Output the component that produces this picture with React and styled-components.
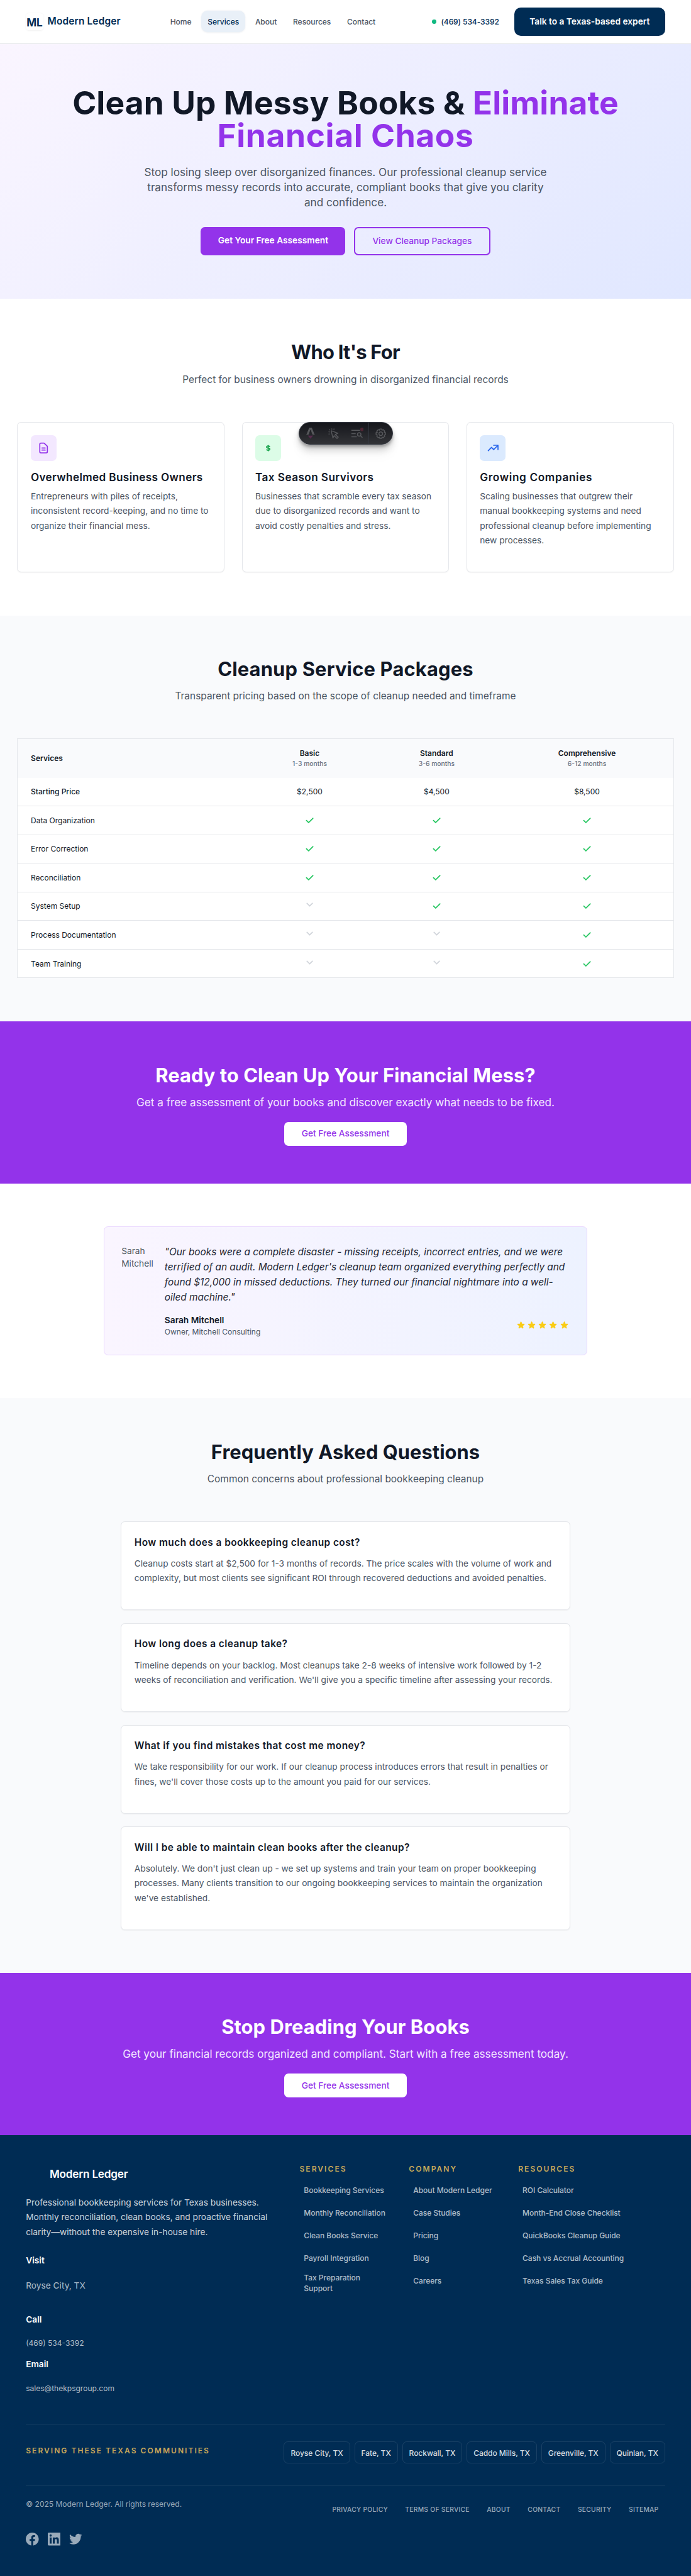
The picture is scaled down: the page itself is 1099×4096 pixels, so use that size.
import React from "react";
import styled, { createGlobalStyle, css } from "styled-components";

const GlobalStyle = createGlobalStyle`
  *, *::before, *::after { box-sizing: border-box; }
  body { margin: 0; background: #fff; }
  h1, h2, h3, p, ul { margin: 0; padding: 0; }
  ul { list-style: none; }
  a { color: inherit; text-decoration: none; }
`;

const navy = "#002c54";
const ink = "#111827";
const muted = "#4b5563";
const purple = "#9333ea";
const line = "#e5e7eb";
const gold = "#c9a959";

const Page = styled.div`
  position: relative;
  width: 1280px;
  zoom: 0.85859;
  overflow: hidden;
  background: #fff;
  color: ${ink};
  font: 400 16px/24px Inter, "Liberation Sans", sans-serif;
`;

/* Header */
const Header = styled.header`
  display: flex;
  align-items: center;
  height: 81px;
  padding: 0 48px;
  border-bottom: 1px solid ${line};
`;
const Brand = styled.a`
  display: flex;
  align-items: center;
  gap: ${(p) => (p.$footer ? 12 : 8)}px;
`;
const LogoMark = styled.span`
  width: 32px;
  height: 32px;
  border-radius: 6px;
  font-size: 20px;
  font-weight: 700;
  line-height: 35px;
  text-align: center;
  letter-spacing: -0.2px;
  color: ${navy};
  box-shadow: ${(p) => (p.$flat ? "none" : "0 1px 3px rgba(0, 0, 0, 0.06)")};
`;
const BrandName = styled.span`
  font-weight: 600;
  line-height: 28px;
  white-space: nowrap;
  ${(p) =>
    p.$footer
      ? css`color: #fff; font-size: 20px; letter-spacing: -0.25px;`
      : css`color: ${navy}; font-size: 18px; letter-spacing: 0.16px;`}
`;
const Nav = styled.nav`
  display: flex;
  gap: 6px;
  margin-left: 80px;
`;
const NavLink = styled.a`
  padding: 10px 12px;
  border-radius: 12px;
  font-size: 14px;
  font-weight: 500;
  line-height: 20px;
  letter-spacing: -0.03px;
  color: ${(p) => (p.$active ? navy : muted)};
  background: ${(p) => (p.$active ? "#e9f0f8" : "transparent")};
  box-shadow: ${(p) => (p.$active ? "0 1px 3px rgba(0, 44, 84, 0.08)" : "none")};
`;
const Phone = styled.a`
  display: flex;
  align-items: center;
  gap: 9px;
  margin-left: auto;
  font-size: 14px;
  font-weight: 500;
  line-height: 20px;
  letter-spacing: -0.1px;
  color: ${navy};
  &::before {
    content: "";
    width: 8px;
    height: 8px;
    border-radius: 50%;
    background: #10b981;
  }
`;
const HeaderCta = styled.a`
  margin-left: 28px;
  padding: 14px 28.5px;
  border-radius: 12px;
  background: ${navy};
  color: #fff;
  font-weight: 600;
`;

/* Hero */
const Hero = styled.section`
  display: flex;
  flex-direction: column;
  align-items: center;
  height: 472px;
  padding-top: 80px;
  text-align: center;
  background: linear-gradient(135deg, #faf5ff 0%, #e0e7ff 100%);
`;
const HeroTitle = styled.h1`
  font-size: 60px;
  font-weight: 700;
  line-height: 60px;
  letter-spacing: 0.12px;
`;
const Accent = styled.span`
  color: ${purple};
  letter-spacing: ${(p) => p.$tracking || "inherit"};
`;
const HeroText = styled.p`
  width: 768px;
  margin-top: 24px;
  font-size: 20px;
  line-height: 28px;
  color: ${muted};
`;
const ButtonRow = styled.div`
  display: flex;
  gap: 16px;
  margin-top: 32px;
`;
const HeroButton = styled.a`
  border-radius: 8px;
  ${(p) =>
    p.$outline
      ? css`padding: 11.7px 31.7px; border: 2.4px solid ${purple}; color: ${purple}; font-weight: 500;`
      : css`padding: 12px 32px; background: ${purple}; color: #fff; font-weight: 600;`}
`;

/* Shared sections */
const Section = styled.section`
  padding: 80px 32px;
  background: ${(p) => (p.$tinted ? "#f9fafc" : "#fff")};
`;
const SectionHead = styled.div`
  margin-bottom: 64px;
  text-align: center;
`;
const SectionTitle = styled.h2`
  font-size: 36px;
  font-weight: 700;
  line-height: 40px;
  letter-spacing: ${(p) => p.$tracking || 0}px;
`;
const SectionText = styled.p`
  margin-top: 16px;
  font-size: 18px;
  line-height: 28px;
  color: ${muted};
`;

const cardBox = css`
  padding: 23.83px;
  border: 1px solid ${line};
  border-radius: 8px;
  background: #fff;
  box-shadow: 0 1px 2px rgba(0, 0, 0, 0.05);
`;
const CardGrid = styled.div`
  display: grid;
  grid-template-columns: repeat(3, 1fr);
  gap: 32px;
`;
const Card = styled.article`
  ${cardBox}
`;
const IconTile = styled.div`
  display: flex;
  align-items: center;
  justify-content: center;
  width: 48px;
  height: 48px;
  border-radius: 8px;
  color: ${(p) => p.$color};
  background: ${(p) => p.$bg};
`;
const CardTitle = styled.h3`
  margin: 16px 0 8px;
  font-size: 20px;
  font-weight: 600;
  line-height: 28px;
  white-space: nowrap;
  letter-spacing: ${(p) => p.$tracking}px;
`;
const BodyText = styled.p`
  margin-bottom: 20px;
  line-height: 27.2px;
  color: ${muted};
`;

/* Floating toolbar */
const Toolbar = styled.div`
  position: absolute;
  z-index: 2;
  top: 782px;
  left: 553px;
  display: flex;
  width: 175px;
  height: 42px;
  border: 1px solid #343841;
  border-radius: 21px;
  background: linear-gradient(180deg, #15161b, #323337);
  box-shadow: 0 4px 5px rgba(0, 0, 0, 0.28), 0 10px 14px rgba(0, 0, 0, 0.16), 0 20px 22px rgba(0, 0, 0, 0.03);
`;
const ToolItem = styled.div`
  display: flex;
  flex: 1;
  align-items: center;
  justify-content: center;
  border-left: ${(p) => (p.$divided ? "1px solid #343841" : "none")};
`;

/* Pricing table */
const Table = styled.div`
  border: 1px solid ${line};
  background: #fff;
`;
const Row = styled.div`
  display: grid;
  grid-template-columns: 424.3px 232.3px 238px 1fr;
  align-items: center;
  height: 53px;
  border-bottom: 1px solid ${line};
  font-size: 14px;
  line-height: 20px;
  &:last-child { height: 52px; border-bottom: 0; }
`;
const HeadRow = styled(Row)`
  height: 71.67px;
  border: 0;
  background: #f9fafc;
  font-weight: 600;
`;
const RowLabel = styled.div`
  padding-left: 24px;
  font-weight: ${(p) => p.$weight || 400};
`;
const Cell = styled.div`
  display: flex;
  flex-direction: column;
  align-items: center;
  text-align: center;
`;
const Duration = styled.span`
  font-size: 12px;
  font-weight: 500;
  color: #6b7280;
`;

/* Purple band */
const Band = styled.section`
  display: flex;
  flex-direction: column;
  align-items: center;
  height: 300px;
  padding-top: 80px;
  color: #fff;
  background: ${purple};
`;
const BandText = styled.p`
  margin-top: 16px;
  font-size: 20px;
  line-height: 28px;
  color: #f3e8ff;
`;
const BandButton = styled.a`
  margin-top: 22px;
  padding: 10px 32px;
  border-radius: 8px;
  background: #fff;
  color: ${purple};
  font-weight: 500;
`;

/* Testimonial */
const Quote = styled.article`
  display: flex;
  gap: 16px;
  width: 896px;
  margin: 0 auto;
  padding: 31.83px;
  border: 1px solid #e9d5ff;
  border-radius: 8px;
  background: linear-gradient(90deg, #faf5ff, #edf2ff);
`;
const Avatar = styled.div`
  flex: none;
  width: 64px;
  color: ${muted};
`;
const QuoteMain = styled.div`
  flex: 1;
`;
const QuoteText = styled.p`
  margin-bottom: 16px;
  font-size: 18px;
  font-style: italic;
  line-height: 28px;
  letter-spacing: -0.05px;
  white-space: nowrap;
  color: #1f2937;
`;
const QuoteFoot = styled.div`
  display: flex;
  align-items: center;
  justify-content: space-between;
`;
const Author = styled.div`
  font-weight: 600;
`;
const AuthorRole = styled.div`
  font-size: 14px;
  line-height: 20px;
  color: ${muted};
`;
const Stars = styled.div`
  display: flex;
  color: #facc15;
  svg { width: 20px; height: 20px; }
`;

/* FAQ */
const FaqList = styled.div`
  display: grid;
  gap: 24px;
  width: 832px;
  margin: 0 auto;
`;
const FaqCard = styled.article`
  ${cardBox}
`;
const FaqTitle = styled.h3`
  margin-bottom: 12px;
  font-size: 18px;
  font-weight: 600;
  line-height: 28px;
  letter-spacing: 0.5px;
`;

/* Footer */
const Footer = styled.footer`
  height: 816px;
  padding: 53px 48px 0;
  color: #fff;
  background: ${navy};
`;
const FooterGrid = styled.div`
  display: grid;
  grid-template-columns: 507px 202.5px 202.5px 1fr;
  height: 481.5px;
`;
const FooterIntro = styled.p`
  width: 470px;
  margin: 21px 0 26px;
  line-height: 27.2px;
  color: rgba(255, 255, 255, 0.8);
`;
const BrandSlot = styled.div`
  padding-top: 3px;
  height: 38px;
`;
const ContactLabel = styled.div`
  font-weight: 600;
`;
const ContactValue = styled.div`
  margin: ${(p) => p.$space};
  color: rgba(255, 255, 255, 0.7);
  ${(p) => p.$small && css`font-size: 14px; line-height: 20px;`}
`;
const Eyebrow = styled.div`
  font-size: 14px;
  font-weight: 600;
  line-height: 20px;
  letter-spacing: 2.38px;
  text-transform: uppercase;
  color: ${gold};
`;
const LinkList = styled.ul`
  display: grid;
  gap: 6px;
  margin-top: 11px;
  padding-left: 8px;
`;
const LinkItem = styled.li`
  display: flex;
  align-items: center;
  min-height: 36px;
  max-width: ${(p) => (p.$wrap ? "130px" : "none")};
  padding: 2px 0;
  font-size: 14px;
  font-weight: 500;
  line-height: 20px;
  letter-spacing: -0.05px;
  color: rgba(255, 255, 255, 0.7);
`;
const Communities = styled.div`
  display: flex;
  align-items: flex-start;
  justify-content: space-between;
  height: 113px;
  padding-top: 32px;
  border-top: 1px solid rgba(255, 255, 255, 0.1);
  ${Eyebrow} { margin-top: 7px; }
`;
const Chips = styled.div`
  display: flex;
  gap: 8px;
`;
const Chip = styled.span`
  padding: 10px 11.6px 8px;
  border: 1px solid rgba(255, 255, 255, 0.1);
  border-radius: 8px;
  font-size: 14px;
  font-weight: 500;
  line-height: 20px;
  letter-spacing: -0.05px;
  color: rgba(255, 255, 255, 0.85);
`;
const Legal = styled.div`
  display: flex;
  justify-content: space-between;
  padding-top: 25px;
  border-top: 1px solid rgba(255, 255, 255, 0.12);
  font-size: 14px;
  line-height: 20px;
  color: rgba(255, 255, 255, 0.6);
`;
const LegalLinks = styled.div`
  display: flex;
  gap: 32px;
  padding: 12px 12px 0 0;
  font-size: 12px;
  font-weight: 500;
  line-height: 16px;
  letter-spacing: 0.3px;
  text-transform: uppercase;
`;
const Social = styled.div`
  display: flex;
  gap: 16px;
  margin-top: 43px;
  svg { width: 24px; height: 24px; }
`;

/* Icons */
const OutlineIcon = ({ d }) => (
  <svg width="24" height="24" viewBox="0 0 24 24" fill="none" stroke="currentColor" strokeWidth="2" strokeLinecap="round" strokeLinejoin="round">
    <path d={d} />
  </svg>
);
const SolidIcon = ({ d, box = 20 }) => (
  <svg width="20" height="20" viewBox={`0 0 ${box} ${box}`} fill="currentColor">
    <path d={d} />
  </svg>
);
const MarkWrap = styled.span`
  display: flex;
  color: ${(p) => (p.$on ? "#22c55e" : "#d1d5db")};
`;
const Mark = ({ on }) => (
  <MarkWrap $on={on}>
    <SolidIcon
      d={
        on
          ? "M16.707 5.293a1 1 0 010 1.414l-8 8a1 1 0 01-1.414 0l-4-4a1 1 0 011.414-1.414L8 12.586l7.293-7.293a1 1 0 011.414 0z"
          : "M4.293 4.293a1 1 0 011.414 0L10 8.586l4.293-4.293a1 1 0 111.414 1.414L10 11.414 4.293 5.707a1 1 0 010-1.414z"
      }
    />
  </MarkWrap>
);
const docPath =
  "M9 12h6m-6 4h6m2 5H7a2 2 0 01-2-2V5a2 2 0 012-2h5.586a1 1 0 01.707.293l5.414 5.414a1 1 0 01.293.707V19a2 2 0 01-2 2z";
const trendPath = "M13 7h8m0 0v8m0-8l-8 8-4-4-6 6";
const dollarPath =
  "M11 5a1 1 0 10-2 0v.092a4.535 4.535 0 00-1.676.662C6.602 6.234 6 7.009 6 8c0 .99.602 1.765 1.324 2.246.48.32 1.054.545 1.676.662v1.941c-.391-.127-.68-.317-.843-.504a1 1 0 10-1.51 1.31c.562.649 1.413 1.076 2.353 1.253V15a1 1 0 102 0v-.092a4.535 4.535 0 001.676-.662C13.398 13.766 14 12.991 14 12c0-.99-.602-1.765-1.324-2.246A4.535 4.535 0 0011 9.092V7.151c.391.127.68.317.843.504a1 1 0 101.511-1.31c-.563-.649-1.413-1.076-2.354-1.253V5zM8.433 7.418c.155-.103.346-.196.567-.267v1.698a2.305 2.305 0 01-.567-.267C8.07 8.34 8 8.114 8 8c0-.114.07-.34.433-.582zM11 12.849v-1.698c.22.071.412.164.567.267.364.243.433.468.433.582 0 .114-.07.34-.433.582a2.305 2.305 0 01-.567.267z";
const starPath =
  "M9.049 2.927c.3-.921 1.603-.921 1.902 0l1.070 3.292a1 1 0 00.95.69h3.462c.969 0 1.371 1.240.588 1.810l-2.800 2.034a1 1 0 00-.364 1.118l1.070 3.292c.3.921-.755 1.688-1.540 1.118l-2.800-2.034a1 1 0 00-1.175 0l-2.800 2.034c-.784.57-1.838-.197-1.539-1.118l1.070-3.292a1 1 0 00-.364-1.118L2.980 8.720c-.783-.57-.38-1.810.588-1.810h3.461a1 1 0 00.951-.69l1.070-3.292z";
const facebookPath =
  "M24 12.073c0-6.627-5.373-12-12-12s-12 5.373-12 12c0 5.990 4.388 10.954 10.125 11.854v-8.385H7.078v-3.470h3.047V9.430c0-3.007 1.792-4.669 4.533-4.669 1.312 0 2.686.235 2.686.235v2.953H15.830c-1.491 0-1.956.925-1.956 1.874v2.250h3.328l-.532 3.470h-2.796v8.385C19.612 23.027 24 18.062 24 12.073z";
const linkedinPath =
  "M20.447 20.452h-3.554v-5.569c0-1.328-.027-3.037-1.852-3.037-1.853 0-2.136 1.445-2.136 2.939v5.667H9.351V9h3.414v1.561h.046c.477-.9 1.637-1.850 3.370-1.850 3.601 0 4.267 2.370 4.267 5.455v6.286zM5.337 7.433c-1.144 0-2.063-.926-2.063-2.065 0-1.138.92-2.063 2.063-2.063 1.140 0 2.064.925 2.064 2.063 0 1.139-.925 2.065-2.064 2.065zm1.782 13.019H3.555V9h3.564v11.452zM22.225 0H1.771C.792 0 0 .774 0 1.729v20.542C0 23.227.792 24 1.771 24h20.451C23.200 24 24 23.227 24 22.271V1.729C24 .774 23.200 0 22.222 0h.003z";
const twitterPath =
  "M23.953 4.570a10 10 0 01-2.825.775 4.958 4.958 0 002.163-2.723c-.951.555-2.005.959-3.127 1.184a4.920 4.920 0 00-8.384 4.482C7.690 8.095 4.067 6.130 1.640 3.162a4.822 4.822 0 00-.666 2.475c0 1.710.87 3.213 2.188 4.096a4.904 4.904 0 01-2.228-.616v.06a4.923 4.923 0 003.946 4.827 4.996 4.996 0 01-2.212.085 4.936 4.936 0 004.604 3.417 9.867 9.867 0 01-6.102 2.105c-.39 0-.779-.023-1.170-.067a13.995 13.995 0 007.557 2.209c9.053 0 13.998-7.496 13.998-13.985 0-.21 0-.42-.015-.63A9.935 9.935 0 0024 4.590z";

const grey = "#56575b";
const FloatingToolbar = () => (
  <Toolbar>
    <ToolItem>
      <svg width="16" height="21" viewBox="0 0 16 21">
        <path fill={grey} d="M5.6 0h4.8L16 14q-2.3-1.2-4.7-1.500L8.6 4.300Q8 3 7.400 4.300L4.700 12.500Q2.300 12.800 0 14z" />
        <path fill="#562b4c" d="M4 14.200q4 1.600 8 0c.3 2.300-1.500 3.300-2.400 4.300C9 19.200 8.600 20 8.200 21c-.8-1-.8-1.900-2-2.600-1.500-.9-2.500-2.200-2.200-4.200z" />
      </svg>
    </ToolItem>
    <ToolItem>
      <svg width="20" height="20" viewBox="0 0 20 20" fill="none" stroke={grey} strokeWidth="1.7" strokeLinejoin="round">
        <path d="M5.500 4.500l12.500 4.700-5 2.300 5.500 5-2.200 2.300-5.300-5-2.300 4.200z" />
        <path d="M7 2.500L6.500.5M10.300 2.500l.7-2M2.700 7L.7 6.300M2.700 10.300l-2 .7M3.300 3.500L2 2.200" />
      </svg>
    </ToolItem>
    <ToolItem>
      <svg width="24" height="22" viewBox="0 0 24 22" fill="none" stroke={grey} strokeWidth="1.8">
        <path d="M1 5h16M1 11h8M1 17h10" />
        <circle cx="15.5" cy="12.5" r="3.2" />
        <path d="M17.500 14.500l4 4" />
        <circle cx="20.7" cy="3.3" r="3.300" fill="#4f2634" stroke="none" />
      </svg>
    </ToolItem>
    <ToolItem $divided>
      <svg width="20" height="20" viewBox="0 0 20 20" fill="none" stroke={grey} strokeWidth="1.7" strokeLinejoin="round">
        <path d="M8.200 1.300h3.600l.7 2.300 2.100-1.100 2.900 2.900-1.100 2.100 2.300.7v3.600l-2.300.7 1.100 2.100-2.900 2.900-2.100-1.100-.7 2.300H8.200l-.7-2.300-2.100 1.100-2.900-2.900 1.100-2.100-2.300-.7V8.200l2.300-.7-1.100-2.100 2.900-2.900 2.100 1.100z" />
        <circle cx="10" cy="10" r="3.4" />
      </svg>
    </ToolItem>
  </Toolbar>
);

const packages = [
  ["Basic", "1-3 months"],
  ["Standard", "3-6 months"],
  ["Comprehensive", "6-12 months"],
];
const features = [
  ["Data Organization", [1, 1, 1]],
  ["Error Correction", [1, 1, 1]],
  ["Reconciliation", [1, 1, 1]],
  ["System Setup", [0, 1, 1]],
  ["Process Documentation", [0, 0, 1]],
  ["Team Training", [0, 0, 1]],
];
const faqs = [
  ["How much does a bookkeeping cleanup cost?", "Cleanup costs start at $2,500 for 1-3 months of records. The price scales with the volume of work and complexity, but most clients see significant ROI through recovered deductions and avoided penalties."],
  ["How long does a cleanup take?", "Timeline depends on your backlog. Most cleanups take 2-8 weeks of intensive work followed by 1-2 weeks of reconciliation and verification. We'll give you a specific timeline after assessing your records."],
  ["What if you find mistakes that cost me money?", "We take responsibility for our work. If our cleanup process introduces errors that result in penalties or fines, we'll cover those costs up to the amount you paid for our services."],
  ["Will I be able to maintain clean books after the cleanup?", "Absolutely. We don't just clean up - we set up systems and train your team on proper bookkeeping processes. Many clients transition to our ongoing bookkeeping services to maintain the organization we've established."],
];
const footerColumns = [
  ["Services", ["Bookkeeping Services", "Monthly Reconciliation", "Clean Books Service", "Payroll Integration", "Tax Preparation Support"]],
  ["Company", ["About Modern Ledger", "Case Studies", "Pricing", "Blog", "Careers"]],
  ["Resources", ["ROI Calculator", "Month-End Close Checklist", "QuickBooks Cleanup Guide", "Cash vs Accrual Accounting", "Texas Sales Tax Guide"]],
];
const cities = ["Royse City, TX", "Fate, TX", "Rockwall, TX", "Caddo Mills, TX", "Greenville, TX", "Quinlan, TX"];
const legal = ["Privacy Policy", "Terms of Service", "About", "Contact", "Security", "Sitemap"];

export default function App() {
  return (
    <Page>
      <GlobalStyle />
      <Header>
        <Brand href="#">
          <LogoMark>ML</LogoMark>
          <BrandName>Modern Ledger</BrandName>
        </Brand>
        <Nav>
          {["Home", "Services", "About", "Resources", "Contact"].map((n) => (
            <NavLink key={n} href="#" $active={n === "Services"}>{n}</NavLink>
          ))}
        </Nav>
        <Phone href="#">(469) 534-3392</Phone>
        <HeaderCta href="#">Talk to a Texas-based expert</HeaderCta>
      </Header>

      <Hero>
        <HeroTitle>
          Clean Up Messy Books &amp; <Accent>Eliminate</Accent>
          <br />
          <Accent $tracking="0.7px">Financial Chaos</Accent>
        </HeroTitle>
        <HeroText>
          Stop losing sleep over disorganized finances. Our professional cleanup service transforms messy records into accurate, compliant books that give you clarity and confidence.
        </HeroText>
        <ButtonRow>
          <HeroButton href="#">Get Your Free Assessment</HeroButton>
          <HeroButton href="#" $outline>View Cleanup Packages</HeroButton>
        </ButtonRow>
      </Hero>

      <Section>
        <SectionHead>
          <SectionTitle $tracking={-0.85}>Who It's For</SectionTitle>
          <SectionText>Perfect for business owners drowning in disorganized financial records</SectionText>
        </SectionHead>
        <CardGrid>
          <Card>
            <IconTile $color="#9333ea" $bg="#f3e8ff"><OutlineIcon d={docPath} /></IconTile>
            <CardTitle $tracking={0.41}>Overwhelmed Business Owners</CardTitle>
            <BodyText>Entrepreneurs with piles of receipts, inconsistent record-keeping, and no time to organize their financial mess.</BodyText>
          </Card>
          <Card>
            <IconTile $color="#16a34a" $bg="#dcfce7"><SolidIcon d={dollarPath} /></IconTile>
            <CardTitle $tracking={0.5}>Tax Season Survivors</CardTitle>
            <BodyText>Businesses that scramble every tax season due to disorganized records and want to avoid costly penalties and stress.</BodyText>
          </Card>
          <Card>
            <IconTile $color="#2563eb" $bg="#dbeafe"><OutlineIcon d={trendPath} /></IconTile>
            <CardTitle $tracking={0.76}>Growing Companies</CardTitle>
            <BodyText>Scaling businesses that outgrew their manual bookkeeping systems and need professional cleanup before implementing new processes.</BodyText>
          </Card>
        </CardGrid>
      </Section>

      <Section $tinted>
        <SectionHead>
          <SectionTitle $tracking={0.21}>Cleanup Service Packages</SectionTitle>
          <SectionText>Transparent pricing based on the scope of cleanup needed and timeframe</SectionText>
        </SectionHead>
        <Table>
          <HeadRow>
            <RowLabel $weight={600}>Services</RowLabel>
            {packages.map(([name, span]) => (
              <Cell key={name}>{name}<Duration>{span}</Duration></Cell>
            ))}
          </HeadRow>
          <Row>
            <RowLabel $weight={500}>Starting Price</RowLabel>
            <Cell>$2,500</Cell>
            <Cell>$4,500</Cell>
            <Cell>$8,500</Cell>
          </Row>
          {features.map(([name, marks]) => (
            <Row key={name}>
              <RowLabel>{name}</RowLabel>
              {marks.map((m, i) => <Cell key={i}><Mark on={!!m} /></Cell>)}
            </Row>
          ))}
        </Table>
      </Section>

      <Band>
        <SectionTitle $tracking={0.05}>Ready to Clean Up Your Financial Mess?</SectionTitle>
        <BandText>Get a free assessment of your books and discover exactly what needs to be fixed.</BandText>
        <BandButton href="#">Get Free Assessment</BandButton>
      </Band>

      <Section>
        <Quote>
          <Avatar>Sarah Mitchell</Avatar>
          <QuoteMain>
            <QuoteText>
              "Our books were a complete disaster - missing receipts, incorrect entries, and we were<br />
              terrified of an audit. Modern Ledger's cleanup team organized everything perfectly and<br />
              found $12,000 in missed deductions. They turned our financial nightmare into a well-<br />
              oiled machine."
            </QuoteText>
            <QuoteFoot>
              <div>
                <Author>Sarah Mitchell</Author>
                <AuthorRole>Owner, Mitchell Consulting</AuthorRole>
              </div>
              <Stars>
                {[0, 1, 2, 3, 4].map((i) => (
                  <svg key={i} viewBox="-1.4 -1.1 22.8 22.8" fill="currentColor" stroke="currentColor" strokeWidth="0.5"><path d={starPath} /></svg>
                ))}
              </Stars>
            </QuoteFoot>
          </QuoteMain>
        </Quote>
      </Section>

      <Section $tinted>
        <SectionHead>
          <SectionTitle $tracking={0.03}>Frequently Asked Questions</SectionTitle>
          <SectionText>Common concerns about professional bookkeeping cleanup</SectionText>
        </SectionHead>
        <FaqList>
          {faqs.map(([q, a]) => (
            <FaqCard key={q}>
              <FaqTitle>{q}</FaqTitle>
              <BodyText>{a}</BodyText>
            </FaqCard>
          ))}
        </FaqList>
      </Section>

      <Band>
        <SectionTitle $tracking={0.11}>Stop Dreading Your Books</SectionTitle>
        <BandText>Get your financial records organized and compliant. Start with a free assessment today.</BandText>
        <BandButton href="#">Get Free Assessment</BandButton>
      </Band>

      <Footer>
        <FooterGrid>
          <div>
            <BrandSlot>
              <Brand href="#" $footer>
                <LogoMark $flat />
                <BrandName $footer>Modern Ledger</BrandName>
              </Brand>
            </BrandSlot>
            <FooterIntro>
              Professional bookkeeping services for Texas businesses. Monthly reconciliation, clean books, and proactive financial clarity—without the expensive in-house hire.
            </FooterIntro>
            <ContactLabel>Visit</ContactLabel>
            <ContactValue $space="23.5px 0 38.5px">Royse City, TX</ContactValue>
            <ContactLabel>Call</ContactLabel>
            <ContactValue $small $space="22px 0 16.5px">(469) 534-3392</ContactValue>
            <ContactLabel>Email</ContactLabel>
            <ContactValue $small $space="23px 0 0">sales@thekpsgroup.com</ContactValue>
          </div>
          {footerColumns.map(([title, links]) => (
            <div key={title}>
              <Eyebrow>{title}</Eyebrow>
              <LinkList>
                {links.map((l) => (
                  <LinkItem key={l} $wrap={l === "Tax Preparation Support"}>{l}</LinkItem>
                ))}
              </LinkList>
            </div>
          ))}
        </FooterGrid>
        <Communities>
          <Eyebrow>Serving these Texas communities</Eyebrow>
          <Chips>{cities.map((c) => <Chip key={c}>{c}</Chip>)}</Chips>
        </Communities>
        <Legal>
          <div>
            © 2025 Modern Ledger. All rights reserved.
            <Social>
              <SolidIcon box={24} d={facebookPath} />
              <SolidIcon box={24} d={linkedinPath} />
              <SolidIcon box={24} d={twitterPath} />
            </Social>
          </div>
          <LegalLinks>{legal.map((l) => <a key={l} href="#">{l}</a>)}</LegalLinks>
        </Legal>
      </Footer>

      <FloatingToolbar />
    </Page>
  );
}
